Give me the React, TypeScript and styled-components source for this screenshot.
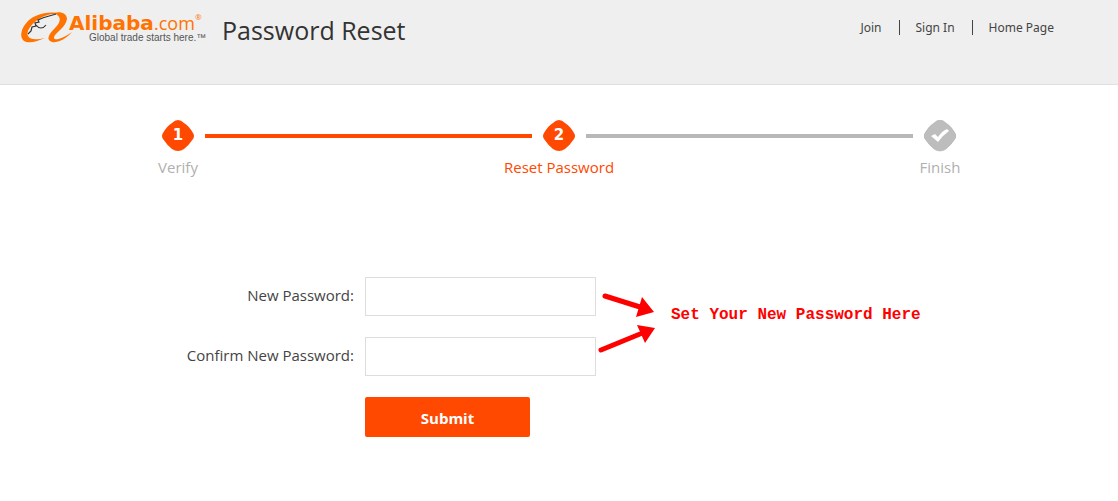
import React from "react";
import styled, { createGlobalStyle } from "styled-components";

const orange = "#ff4800";
const grey = "#b8b8b8";

const GlobalStyle = createGlobalStyle`
  * { box-sizing: border-box; }
  body {
    margin: 0;
    background: #fff;
    color: #444;
    font-family: Tahoma, "Open Sans", sans-serif;
    font-size: 15px;
  }
`;

const Header = styled.header`
  display: flex;
  justify-content: space-between;
  align-items: flex-start;
  min-height: 85px;
  padding: 12px 64px 0 21px;
  background: #efefef;
  border-bottom: 1px solid #e0e0e0;
`;

const Brand = styled.div`
  display: flex;
  align-items: flex-start;
  gap: 15px;
`;

const LogoLink = styled.a`
  display: block;
  svg { display: block; overflow: visible; }
`;

const Title = styled.h1`
  margin: 0;
  color: #333;
  font-size: 25px;
  font-weight: 400;
  line-height: 36px;
`;

const Nav = styled.nav`
  display: flex;
  align-items: center;
  padding-top: 8px;
`;

const NavLink = styled.a`
  padding: 0 17px 0 16px;
  color: #444;
  font-family: "Noto Sans", sans-serif;
  font-size: 12px;
  line-height: 15px;
  text-decoration: none;
  & + & { border-left: 1px solid #444; }
  &:last-child { padding-right: 0; }
`;

const Main = styled.main`
  max-width: 816px;
  margin: 0 auto;
  padding-top: 35px;
`;

const Steps = styled.ol`
  display: grid;
  grid-template-columns: 54px 1fr 54px 1fr 54px;
  margin: 0;
  padding: 0;
  list-style: none;
`;

const Step = styled.li<{ $current?: boolean }>`
  display: flex;
  flex-direction: column;
  align-items: center;
  gap: 5px;
  color: ${(p) => (p.$current ? orange : "#b0b0b0")};
  line-height: 20px;
  white-space: nowrap;
`;

const Marker = styled.svg`
  display: block;
  flex: none;
  font: bold 15px "DejaVu Sans", sans-serif;
`;

const Line = styled.li<{ $done?: boolean }>`
  height: 4px;
  margin-top: 14px;
  background: ${(p) => (p.$done ? orange : grey)};
`;

const Form = styled.form`
  display: grid;
  grid-template-columns: 203px 231px 1fr;
  column-gap: 11px;
  row-gap: 21px;
  align-items: center;
  margin-top: 100px;
`;

const Label = styled.label`
  text-align: right;
  line-height: 20px;
  white-space: nowrap;
  padding-bottom: 4px;
`;

const Input = styled.input`
  grid-column: 2;
  width: 100%;
  height: 39px;
  padding: 0 10px;
  border: 1px solid #ddd;
  background: #fff;
  font: inherit;
`;

const Note = styled.div`
  grid-column: 3;
  grid-row: 1 / span 2;
  display: flex;
  align-items: center;
  gap: 15px;
  margin-left: -9px;
  color: #f00;
  font: bold 16px "Liberation Mono", monospace;
  white-space: nowrap;
  svg { flex: none; overflow: visible; }
`;

const NoteText = styled.span`
  padding-bottom: 24px;
`;

const Submit = styled.button`
  grid-column: 2;
  justify-self: start;
  width: 165px;
  height: 40px;
  padding: 2px 0 0;
  border: 0;
  border-radius: 2px;
  background: ${orange};
  color: #fff;
  font: bold 15px "Open Sans", sans-serif;
`;

function Logo() {
  return (
    <svg width="186" height="32" viewBox="0 0 186 32" role="img" aria-label="Alibaba.com">
      <g fill="#ff7300">
        <path d="M40 2C28-2 14 2 7 9C0 16-2 25 3 29C8 32 17 29 24 26C16 28 9 28 7 24C5 20 9 14 14 10C21 4 29 1 40 2Z" />
        <path d="M33 1C40-1 46 2 46 7C45 15 35 20 33 25C32 29 40 28 51 20C44 28 36 31 31 30C25 28 27 23 34 16C41 9 40 4 33 1Z" />
      </g>
      <path d="M35 2C30 4 24 4 17 8L18 10L14 11L15 14L11 15L10 19L7 22M15 13C18 17 22 17 25 13" fill="none" stroke="#333" strokeWidth="1.2" />
      <g fill="#ff7300" fontFamily="Open Sans, sans-serif">
        <text x="48" y="18" fontSize="20" fontWeight="700" fontFamily="DejaVu Sans, sans-serif">Alibaba</text>
        <text x="133" y="18" fontSize="18">.com</text>
        <text x="174" y="8" fontSize="8">®</text>
      </g>
      <text x="68" y="29" fill="#555" fontSize="10" fontFamily="Liberation Sans, sans-serif">Global trade starts here.™</text>
    </svg>
  );
}

const diamond = "M16 0Q19 0 22 3Q27 6 31 13Q33 16 31 19Q27 25 22 29Q19 31 16 31Q13 31 10 29Q5 25 1 19Q-1 16 1 13Q5 6 10 3Q13 0 16 0Z";

function StepMarker({ number }: { number?: number }) {
  return (
    <Marker width="32" height="32" viewBox="0 0 32 32" aria-hidden="true">
      <path d={diamond} fill={number ? orange : "#bdbdbd"} stroke={number ? "none" : "#aaa"} strokeWidth="0.5" />
      {number ? (
        <text x="16" y="20" textAnchor="middle" fill="#fff">{number}</text>
      ) : (
        <path d="M7 16L11 14L14 17Q18 11 23 9L25 11Q19 15 14 22Z" fill="#fff" />
      )}
    </Marker>
  );
}

export default function App() {
  return (
    <>
      <GlobalStyle />
      <Header>
        <Brand>
          <LogoLink href="#home"><Logo /></LogoLink>
          <Title>Password Reset</Title>
        </Brand>
        <Nav>
          <NavLink href="#join">Join</NavLink>
          <NavLink href="#signin">Sign In</NavLink>
          <NavLink href="#home">Home Page</NavLink>
        </Nav>
      </Header>
      <Main>
        <Steps>
          <Step><StepMarker number={1} />Verify</Step>
          <Line $done aria-hidden="true" />
          <Step $current aria-current="step"><StepMarker number={2} />Reset Password</Step>
          <Line aria-hidden="true" />
          <Step><StepMarker />Finish</Step>
        </Steps>
        <Form onSubmit={(e) => e.preventDefault()}>
          <Label htmlFor="password">New Password:</Label>
          <Input id="password" type="password" />
          <Label htmlFor="confirm">Confirm New Password:</Label>
          <Input id="confirm" type="password" />
          <Note>
            <svg width="58" height="64" viewBox="598 294 58 64" aria-hidden="true">
              <g stroke="#f00" strokeWidth="5" strokeLinecap="round">
                <path d="M605 295L640 306M601 349L640 333" />
              </g>
              <path d="M642 296L654 311L636 316ZM637 324L655 327L645 342Z" fill="#f00" />
            </svg>
            <NoteText>Set Your New Password Here</NoteText>
          </Note>
          <Submit type="submit">Submit</Submit>
        </Form>
      </Main>
    </>
  );
}
